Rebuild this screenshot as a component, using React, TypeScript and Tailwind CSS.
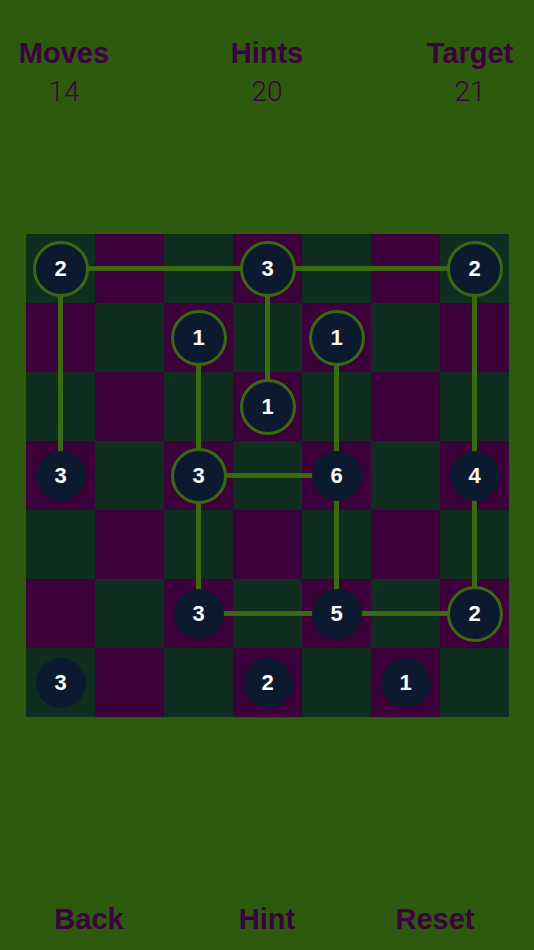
import React from 'react';

type Node = { r: number; c: number; n: number; active?: boolean };

const nodes: Node[] = [
  { r: 0, c: 0, n: 2, active: true },
  { r: 0, c: 3, n: 3, active: true },
  { r: 0, c: 6, n: 2, active: true },
  { r: 1, c: 2, n: 1, active: true },
  { r: 1, c: 4, n: 1, active: true },
  { r: 2, c: 3, n: 1, active: true },
  { r: 3, c: 0, n: 3 },
  { r: 3, c: 2, n: 3, active: true },
  { r: 3, c: 4, n: 6 },
  { r: 3, c: 6, n: 4 },
  { r: 5, c: 2, n: 3 },
  { r: 5, c: 4, n: 5 },
  { r: 5, c: 6, n: 2, active: true },
  { r: 6, c: 0, n: 3 },
  { r: 6, c: 3, n: 2 },
  { r: 6, c: 5, n: 1 },
];

// bridges as [r1, c1, r2, c2]
const bridges: [number, number, number, number][] = [
  [0, 0, 0, 3],
  [0, 3, 0, 6],
  [0, 0, 3, 0],
  [0, 3, 2, 3],
  [0, 6, 3, 6],
  [3, 6, 5, 6],
  [1, 2, 3, 2],
  [1, 4, 3, 4],
  [3, 2, 3, 4],
  [3, 2, 5, 2],
  [3, 4, 5, 4],
  [5, 2, 5, 4],
  [5, 4, 5, 6],
];

const CELL = 69;
const center = (i: number) => i * CELL + 34.5;

function Stat({ label, value }: { label: string; value: string }) {
  return (
    <div className="w-[128px] flex flex-col items-center">
      <div className="text-[29px] leading-[30px] font-bold text-[#3d0040]">{label}</div>
      <div
        className="mt-[9px] text-[28px] leading-[30px] font-light text-[#3d0040]"
        style={{ fontFamily: 'Roboto, "Liberation Sans", sans-serif' }}
      >
        {value}
      </div>
    </div>
  );
}

function Board() {
  const cells = [];
  for (let r = 0; r < 7; r++) {
    for (let c = 0; c < 7; c++) {
      cells.push(
        <div
          key={`${r}-${c}`}
          className={(r + c) % 2 === 0 ? 'bg-[#0f2e1f]' : 'bg-[#3c003a]'}
        />
      );
    }
  }
  return (
    <div className="relative w-[483px] h-[483px] ml-[26px]">
      <div className="grid grid-cols-7 grid-rows-7 w-full h-full">{cells}</div>
      <svg className="absolute inset-0" width="483" height="483">
        {bridges.map(([r1, c1, r2, c2], i) => (
          <line
            key={i}
            x1={center(c1)}
            y1={center(r1)}
            x2={center(c2)}
            y2={center(r2)}
            stroke="#3a6a0e"
            strokeWidth={5}
          />
        ))}
      </svg>
      {nodes.map((nd, i) => (
        <div
          key={i}
          className={`absolute flex items-center justify-center rounded-full bg-[#0c1a2f] text-white font-bold text-[22px] -translate-x-1/2 -translate-y-1/2 ${
            nd.active ? 'w-[56px] h-[56px] border-[3px] border-[#3a6a0e]' : 'w-[50px] h-[50px]'
          }`}
          style={{ left: center(nd.c), top: center(nd.r) }}
        >
          {nd.n}
        </div>
      ))}
    </div>
  );
}

export default function App() {
  return (
    <div
      className="w-[534px] h-[950px] bg-[#2e5a0e] flex flex-col overflow-hidden"
      style={{ fontFamily: '"Liberation Sans", Arial, sans-serif' }}
    >
      <div className="pt-[38px] flex justify-between">
        <Stat label="Moves" value="14" />
        <Stat label="Hints" value="20" />
        <Stat label="Target" value="21" />
      </div>
      <div className="mt-[127px]">
        <Board />
      </div>
      <div className="mt-[187px] flex text-[29px] leading-[30px] font-bold text-[#3d0040]">
        <div className="w-[178px] text-center">Back</div>
        <div className="w-[178px] text-center">Hint</div>
        <div className="w-[178px] text-center pr-[20px]">Reset</div>
      </div>
    </div>
  );
}
